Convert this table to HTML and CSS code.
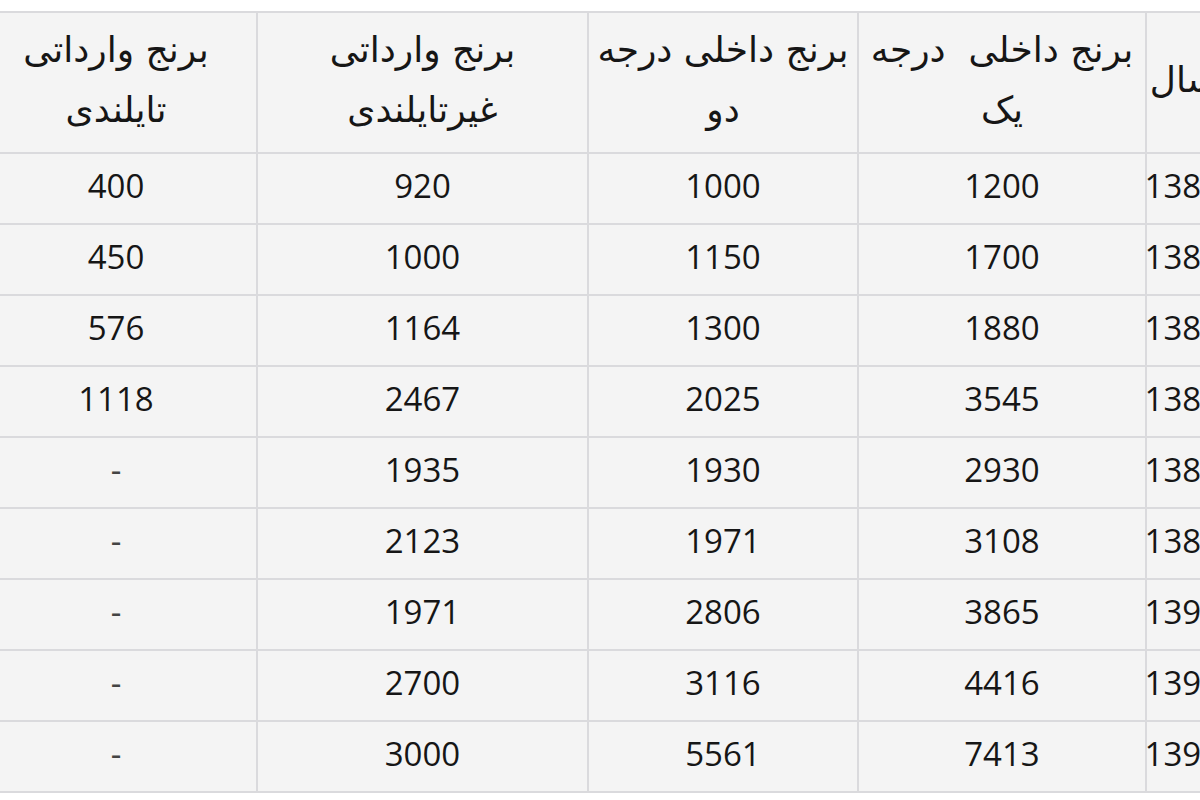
FILE: index.html
```html
<!DOCTYPE html>
<html lang="fa">
<head>
<meta charset="utf-8">
<title>قیمت برنج</title>
<link rel="stylesheet" href="styles.css">
</head>
<body>
<div class="frame">
  <table class="prices" dir="rtl">
    <colgroup>
      <col class="c-year">
      <col class="c-one">
      <col class="c-two">
      <col class="c-imp">
      <col class="c-thai">
    </colgroup>
    <thead>
      <tr>
        <th>سال</th>
        <th>برنج داخلی &nbsp;درجه<br>یک</th>
        <th>برنج داخلی درجه<br>دو</th>
        <th>برنج وارداتی<br>غیرتایلندی</th>
        <th>برنج وارداتی<br>تایلندی</th>
      </tr>
    </thead>
    <tbody>
      <tr><td>1384</td><td>1200</td><td>1000</td><td>920</td><td>400</td></tr>
      <tr><td>1385</td><td>1700</td><td>1150</td><td>1000</td><td>450</td></tr>
      <tr><td>1386</td><td>1880</td><td>1300</td><td>1164</td><td>576</td></tr>
      <tr><td>1387</td><td>3545</td><td>2025</td><td>2467</td><td>1118</td></tr>
      <tr><td>1388</td><td>2930</td><td>1930</td><td>1935</td><td class="dash">-</td></tr>
      <tr><td>1389</td><td>3108</td><td>1971</td><td>2123</td><td class="dash">-</td></tr>
      <tr><td>1390</td><td>3865</td><td>2806</td><td>1971</td><td class="dash">-</td></tr>
      <tr><td>1391</td><td>4416</td><td>3116</td><td>2700</td><td class="dash">-</td></tr>
      <tr><td>1392</td><td>7413</td><td>5561</td><td>3000</td><td class="dash">-</td></tr>
    </tbody>
  </table>
</div>
</body>
</html>
```

FILE: styles.css
```css
html, body {
  margin: 0;
  padding: 0;
  background: #ffffff;
}

.frame {
  width: 1200px;
  height: 800px;
  overflow: hidden;
  padding-top: 11px;
  box-sizing: border-box;
}

.prices {
  margin-left: -26px;
  width: 1246px;
  table-layout: fixed;
  border-collapse: collapse;
  background: #f4f4f4;
  font-family: "Open Sans", "DejaVu Sans", sans-serif;
  color: #161616;
}

.c-year { width: 75px; }
.c-one { width: 288px; }
.c-two { width: 270px; }
.c-imp { width: 331px; }
.c-thai { width: 282px; }

.prices thead tr { height: 141px; }
.prices tbody tr { height: 71px; }

.prices th,
.prices td {
  border: 2px solid #dadadd;
  text-align: center;
  padding: 0;
}

.prices th {
  font-family: "DejaVu Sans", sans-serif;
  font-weight: normal;
  font-size: 36px;
  line-height: 60px;
  vertical-align: middle;
  white-space: nowrap;
  overflow: hidden;
  padding-bottom: 6px;
}

.prices td {
  font-size: 33px;
  line-height: 40px;
  padding-bottom: 5px;
}

.prices td.dash {
  color: #444;
}
```
